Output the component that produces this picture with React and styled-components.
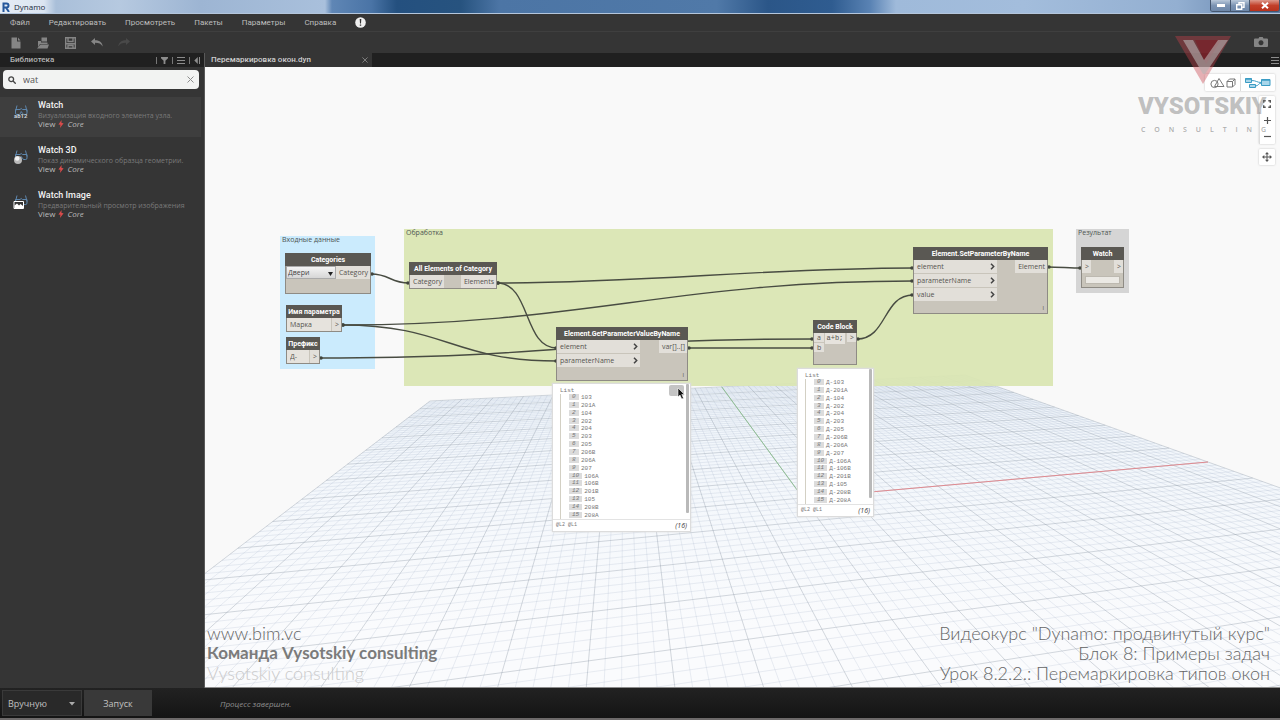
import React from "react";
import styled, { createGlobalStyle, css } from "styled-components";

const Global = createGlobalStyle`
  * { box-sizing: border-box; }
  body { margin: 0; background: #353535; font-family: "Open Sans", "Noto Sans", sans-serif; }
  button, input, select { font-family: inherit; margin: 0; padding: 0; border: 0; border-radius: 0; background: none; color: inherit; }
  ul, p, h1, h2, h3 { margin: 0; padding: 0; list-style: none; font-weight: inherit; font-size: inherit; }
  svg { display: block; flex: none; }
`;

/* ---------- frame ---------- */
const Window = styled.div`
  position: relative;
  display: flex;
  flex-direction: column;
  min-height: 100vh;
  overflow: hidden;
  color: #c8c8c8;
`;
const TitleBar = styled.header`
  display: flex;
  align-items: center;
  justify-content: space-between;
  height: 14px;
  padding-left: 2px;
  border-bottom: 1px solid #b4c6dc;
  color: #1b2b40;
  line-height: 13px;
  background: linear-gradient(90deg, #e6edf6 0, #dbe5f1 44px, #a9bfd9 56px, #b6c9e0 120px, #9db5d3 200px, #a9c0dc 325px, #5f86b5 332px, #4a74a6 29%, #24507f 31%, #27537f 36%, #4c75a5 39%, #5079a8 56%, #2b5688 60%, #2f5c90 65%, #5a83b4 68%, #9fbada 70%, #a3bddc 80%, #93afd1 92%, #5f7fa8 100%);
`;
const TitleText = styled.div`
  display: flex;
  align-items: center;
  gap: 4px;
  font-size: 8px;
`;
const WindowButtons = styled.div`
  display: flex;
  align-self: flex-start;
  height: 12px;
  border: 1px solid #44566f;
  border-top: 0;
  border-radius: 0 0 3px 3px;
  overflow: hidden;
`;
const WindowButton = styled.button`
  display: grid;
  place-items: center;
  width: ${(p) => (p.$close ? 30 : 19)}px;
  color: #fff;
  background: ${(p) => (p.$close ? "linear-gradient(#dd9a8c, #c2402a 50%, #b8321c)" : "linear-gradient(#b9c8da, #7c94b3 50%, #6d87a9)")};
  & + & { border-left: 1px solid #44566f; }
`;
const MenuBar = styled.nav`
  display: flex;
  align-items: center;
  gap: 19px;
  height: 18px;
  padding-left: 10px;
  background: #353535;
  border-bottom: 1px solid #3f3f3f;
`;
const MenuItem = styled.button`
  font-family: Roboto, sans-serif;
  font-size: 8px;
  line-height: 12px;
  color: #bdbdbd;
`;
const Toolbar = styled.div`
  display: flex;
  align-items: center;
  gap: 15px;
  height: 21px;
  padding: 0 12px 0 10px;
  background: #353535;
`;
const ToolButton = styled.button`
  display: grid;
  place-items: center;
  width: 12px;
  height: 14px;
  color: ${(p) => (p.$off ? "#494949" : "#858585")};
  ${(p) => p.$end && css`margin-left: auto; width: 14px;`}
`;
const Main = styled.div`
  display: flex;
  flex: 1;
`;

/* ---------- library ---------- */
const Sidebar = styled.aside`
  flex: none;
  display: flex;
  flex-direction: column;
  width: 205px;
  background: #353535;
  border-right: 1px solid #5a5a5a;
`;
const PanelHead = styled.div`
  display: flex;
  align-items: center;
  gap: 4px;
  height: 14px;
  padding: 0 4px 0 10px;
  background: #202020;
  font-family: Roboto, sans-serif;
  font-size: 8px;
  line-height: 12px;
  font-weight: 500;
  color: #b5b5b5;
  h2 { flex: 1; }
`;
const HeadButton = styled.button`
  display: grid;
  place-items: center;
  color: #8c8c8c;
`;
const Divider = styled.span`
  width: 1px;
  height: 7px;
  background: #777;
`;
const SearchBox = styled.label`
  display: flex;
  align-items: center;
  gap: 7px;
  height: 19px;
  margin: 3px 5px 0 3px;
  padding: 0 5px;
  border-radius: 4px;
  background: #f2f3f2;
  color: #444;
  input { flex: 1; min-width: 0; font-size: 9px; line-height: 14px; outline: 0; color: #555; }
`;
const Results = styled.ul`
  display: flex;
  flex-direction: column;
  gap: 5px;
  padding: 8px 3px 0 0;
`;
const Result = styled.li`
  display: flex;
  gap: 9px;
  height: 40px;
  padding: 3px 0 0 13px;
  background: ${(p) => (p.$active ? "#3e3e3e" : "transparent")};
  white-space: nowrap;
  svg { margin-top: 3px; }
`;
const ResultTitle = styled.h3`
  font-family: Roboto, sans-serif;
  font-size: 9px;
  line-height: 11px;
  color: #f2f2f2;
  font-weight: 500;
`;
const ResultText = styled.p`
  font-size: 7px;
  line-height: 9px;
  color: #7a7a7a;
`;
const ResultPath = styled.p`
  display: flex;
  align-items: center;
  gap: 3px;
  font-size: 8px;
  line-height: 8px;
  color: #bcbcbc;
  svg { margin: 0; }
`;

/* ---------- workspace ---------- */
const Workspace = styled.main`
  flex: 1;
  min-width: 0;
  display: flex;
  flex-direction: column;
`;
const Tabs = styled.div`
  display: flex;
  align-items: center;
  justify-content: space-between;
  height: 14px;
  padding-right: 1px;
  background: #202020;
`;
const Tab = styled.div`
  display: flex;
  align-items: center;
  justify-content: space-between;
  width: 167px;
  height: 14px;
  padding: 0 4px 0 6px;
  background: #353535;
  font-family: Roboto, sans-serif;
  font-size: 8px;
  line-height: 12px;
  font-weight: 500;
  color: #d0d0d0;
`;
const Canvas = styled.section`
  position: relative;
  flex: 1;
  overflow: hidden;
  background: #f9f9f9;
  border-bottom: 1px solid #8d8d8d;
`;
const Layer = styled.svg`
  position: absolute;
  inset: 0;
  width: 100%;
  height: 100%;
`;
const Placed = styled.div`
  position: absolute;
  left: ${(p) => p.$x}px;
  top: ${(p) => p.$y}px;
  width: ${(p) => p.$w}px;
  height: ${(p) => p.$h}px;
`;
const Group = styled(Placed)`
  background: ${(p) => p.$tone};
  padding-left: 2px;
  font-size: 7px;
  line-height: 8px;
  color: #4d5552;
  white-space: nowrap;
`;
const NodeBox = styled(Placed)`
  display: flex;
  flex-direction: column;
  border: 1px solid #8e8b84;
  background: #c9c5bb;
  color: #55534f;
  font-size: 7px;
  white-space: nowrap;
`;
const NodeTitle = styled.h3`
  height: 13px;
  margin: -1px -1px 0;
  background: #5a5853;
  color: #fff;
  font-family: Roboto, sans-serif;
  font-size: 7px;
  line-height: 14px;
  font-weight: 700;
  text-align: center;
`;
const NodeBody = styled.div`
  position: relative;
  display: flex;
  flex: 1;
  justify-content: space-between;
  align-items: flex-start;
`;
const PortColumn = styled.div`
  display: flex;
  flex-direction: column;
  gap: 1px;
  min-width: ${(p) => p.$w || 0}px;
`;
const Port = styled.div`
  display: flex;
  align-items: center;
  justify-content: space-between;
  gap: 2px;
  height: ${(p) => (p.$short ? 9 : 13)}px;
  padding: 0 2px 0 3px;
  background: #e2dfd9;
`;
const Lacing = styled.span`
  position: absolute;
  right: 3px;
  bottom: 1px;
  font-size: 6px;
  line-height: 7px;
`;
const NodeSelect = styled.div`
  position: relative;
  flex: 1;
  height: 13px;
  border: 1px solid #aaa;
  background: linear-gradient(#f4f4f4, #d6d6d6);
  select { display: block; width: 100%; height: 11px; padding-left: 1px; appearance: none; font-size: 7px; line-height: 9px; color: #444; outline: 0; }
  svg { position: absolute; right: 2px; top: 5px; pointer-events: none; }
`;
const NodeInput = styled.input`
  width: ${(p) => p.$w}px;
  height: 13px;
  padding-left: 3px;
  background: #e6e3dd;
  font-size: 7px;
  line-height: 11px;
  outline: 0;
`;
const CodeInput = styled(NodeInput)`
  height: 11px;
  padding-left: 1px;
  font-family: "Liberation Mono", monospace;
`;
const WatchField = styled.div`
  height: 8px;
  margin: 0 3px 3px;
  border: 1px solid #bdb9b0;
  background: #ebe9e4;
`;
const Preview = styled(Placed)`
  display: flex;
  flex-direction: column;
  border: 1px solid #dcdcdc;
  background: #fff;
  color: #777;
  font-family: "Liberation Mono", monospace;
  font-size: 6px;
  line-height: 7px;
  box-shadow: 0 0 2px #ddd;
`;
const PreviewList = styled.div`
  flex: 1;
  padding: 3px 0 0 7px;
  ul {
    display: flex;
    flex-direction: column;
    justify-content: space-between;
    height: 125px;
    padding-left: 8px;
    border-left: 1px solid #d3d0c4;
  }
  li { display: flex; gap: 2px; }
`;
const Index = styled.span`
  min-width: 10px;
  padding: 0 3px;
  background: #dcdcdc;
  font-style: italic;
  height: 6px;
  line-height: 6px;
`;
const PreviewFoot = styled.div`
  display: flex;
  align-items: center;
  justify-content: space-between;
  height: 14px;
  padding: 0 3px;
  border-top: 1px solid #e3e3e3;
  font-size: 5px;
  b { font: italic 400 7px/9px "Open Sans", sans-serif; color: #444; }
`;
const ScrollThumb = styled.span`
  position: absolute;
  top: 0;
  right: 1px;
  width: 3px;
  height: 129px;
  border-radius: 1px;
  background: #b9b9b9;
`;
const PreviewMenu = styled.button`
  position: absolute;
  top: 1px;
  right: 6px;
  width: 15px;
  height: 11px;
  border-radius: 2px;
  background: #c4c4c4;
`;
const Pointer = styled.svg`
  position: absolute;
  left: 472px;
  top: 320px;
`;

/* ---------- view controls ---------- */
const Controls = styled.div`
  position: absolute;
  top: 7px;
  right: 5px;
  display: flex;
  flex-direction: column;
  align-items: flex-end;
  gap: 5px;
`;
const ControlGroup = styled.div`
  display: flex;
  flex-direction: ${(p) => (p.$column ? "column" : "row")};
  border-radius: 1px;
  background: #fff;
  box-shadow: 0 0 2px #bbb;
`;
const ControlButton = styled.button`
  display: grid;
  place-items: center;
  width: ${(p) => (p.$wide ? 35 : 16)}px;
  height: ${(p) => (p.$wide ? 17 : 16)}px;
  color: #555;
  ${(p) => p.$wide && css`& + & { border-left: 1px solid #ddd; }`}
`;

/* ---------- captions ---------- */
const Brand = styled.div`
  position: absolute;
  top: 36px;
  right: 11px;
  width: 131px;
  pointer-events: none;
  svg { margin-left: 37px; }
`;
const BrandName = styled.p`
  margin-top: 7px;
  font-family: Roboto, sans-serif;
  font-size: 24px;
  line-height: 30px;
  font-weight: 900;
  color: rgba(120, 120, 120, 0.45);
`;
const BrandSub = styled.p`
  padding: 4px 3px 0;
  font-size: 7px;
  line-height: 10px;
  font-weight: 600;
  text-align-last: justify;
  color: rgba(120, 120, 120, 0.6);
`;
const Caption = styled.div`
  position: absolute;
  bottom: 4px;
  ${(p) => (p.$right ? "right: 10px; text-align: right;" : "left: 2px;")}
  font-family: Lato, "Open Sans", sans-serif;
  font-size: 18px;
  line-height: 20px;
  font-weight: 300;
  color: #666;
  white-space: nowrap;
  pointer-events: none;
`;
const Team = styled.p`
  font-size: 17px;
  font-weight: 700;
  color: #7b7b7b;
`;
const Faded = styled.p`
  color: #cacaca;
`;

/* ---------- status bar ---------- */
const StatusBar = styled.footer`
  display: flex;
  align-items: center;
  gap: 2px;
  height: 32px;
  padding-left: 2px;
  border-bottom: 2px solid #6d6a6a;
  background: linear-gradient(#222, #141414);
`;
const RunMode = styled.div`
  position: relative;
  width: 80px;
  height: 26px;
  border: 1px solid #3a3a3a;
  background: #292929;
  select { display: block; width: 100%; height: 24px; padding-left: 5px; appearance: none; font-size: 9px; color: #c0c0c0; outline: 0; }
  svg { position: absolute; right: 6px; top: 11px; pointer-events: none; }
`;
const RunButton = styled.button`
  width: 68px;
  height: 26px;
  background: #393939;
  font-size: 9px;
  color: #c0c0c0;
`;
const Status = styled.output`
  margin-left: 66px;
  font-size: 8px;
  font-style: italic;
  color: #8f8f8f;
`;

/* Ground plane: u and v run from -1 to 1 over the grid. */
const project = (u, v) => {
  const w = 0.1651 * u + 0.829 * v + 1;
  const x = (604.4 * u + 516.9 * v + 803) / w - 205;
  const y = (40.3 * u + 209.5 * v + 498) / w - 67;
  return x.toFixed(1) + " " + y.toFixed(1);
};
const segment = (a, b, c, d) => `M${project(a, b)}L${project(c, d)}`;
const gridPath = (major) => {
  let path = "";
  for (let i = -50; i <= 50; i += 1) {
    if ((i % 5 === 0) === major) {
      const t = i / 50;
      path += segment(t, -1, t, 1) + segment(-1, t, 1, t);
    }
  }
  return path;
};
const MINOR = gridPath(false);
const MAJOR = gridPath(true);

const Ground = () => (
  <Layer aria-hidden="true">
    <defs>
      <linearGradient id="haze" gradientUnits="userSpaceOnUse" x1="0" y1="310" x2="0" y2="560">
        <stop offset="0" stopColor="#eef4fa" />
        <stop offset="1" stopColor="#fafbfd" />
      </linearGradient>
    </defs>
    <path d={`M${project(-1, 1)}L${project(1, 1)}L${project(1, -1)}L${project(-1, -1)}Z`} fill="url(#haze)" />
    <path d={MINOR} fill="none" stroke="#9fb0c8" strokeOpacity="0.21" />
    <path d={MAJOR} fill="none" stroke="#84909e" strokeOpacity="0.34" />
    <path d={segment(0, 0, 1, 0)} fill="none" stroke="#e08a90" />
    <path d={segment(0, 0, 0, 1)} fill="none" stroke="#8fbf92" />
  </Layer>
);

const WIRES = [
  [166, 207, 204, 216, 19],
  [292, 216, 708, 201, 150],
  [292, 216, 352, 281, 34],
  [137, 258, 708, 214, 240],
  [137, 258, 352, 294, 105],
  [115, 291, 608, 272, 240],
  [483, 281, 608, 281, 40],
  [652, 272, 708, 228, 30],
  [843, 200, 876, 201, 10],
];
const Wires = () => (
  <Layer aria-hidden="true">
    {WIRES.map(([x1, y1, x2, y2, k], i) => (
      <g key={i} fill="#40443c">
        <path d={`M${x1} ${y1}C${x1 + k} ${y1} ${x2 - k} ${y2} ${x2} ${y2}`} fill="none" stroke="#484c42" strokeWidth="1.4" />
        <circle cx={x1 + 1} cy={y1} r="1.8" />
        <circle cx={x2 - 1} cy={y2} r="1.8" />
      </g>
    ))}
  </Layer>
);

const Chevron = () => (
  <svg width="5" height="7" viewBox="0 0 5 7" fill="none" stroke="#444" strokeWidth="1.5"><path d="M1 .8 3.7 3.5 1 6.2" /></svg>
);
const CloseMark = ({ size = 7 }) => (
  <svg width={size} height={size} viewBox="0 0 7 7" fill="none" stroke="currentColor"><path d="M.5.5l6 6M6.500.5l-6 6" /></svg>
);
const Bars = () => (
  <svg width="8" height="7" viewBox="0 0 8 7" stroke="currentColor"><path d="M0 .5h8M0 3.500h8M0 6.500h8" /></svg>
);
const Bolt = () => (
  <svg width="6" height="8" viewBox="0 0 6 8" fill="#d94b4b"><path d="M3.600 0 .4 4.600l2 .2L2 8l3.600-4.700-2.100-.3z" /></svg>
);
const WatchIcon = ({ kind }) => (
  <svg width="16" height="18" viewBox="0 0 16 18" fill="none">
    <path d="M2.500 8.500 4 2.500M14 8.500 12.500 2.500M2.500 6.500h4.500l1.200-1 1.300 1h4.500v3.500q0 1.500-1.300 1.500h-1.700q-1.200 0-1.500-1.200L8.200 8.500l-.7 1.800q-.3 1.200-1.500 1.200H3.800q-1.300 0-1.300-1.500z" stroke="#5d86ad" />
    {kind === "text" && <text x="1" y="15" fontSize="6" fontWeight="700" fill="#c9d2da" fontFamily="Roboto, sans-serif">ab12</text>}
    {kind === "solid" && <g><circle cx="5" cy="12" r="4" fill="#b9b9b9" /><circle cx="4.200" cy="10.500" r="2.200" fill="#f4f4f4" /></g>}
    {kind === "image" && <g><path d="M1 8.500h9.500v7H1z" fill="#333" stroke="#fff" /><path d="M1.500 15v-2.500l2.500-2 2 2 1.500-1.500 2.500 2v2z" fill="#fff" /></g>}
  </svg>
);

const RESULTS = [
  ["Watch", "Визуализация входного элемента узла.", "text"],
  ["Watch 3D", "Показ динамического образца геометрии.", "solid"],
  ["Watch Image", "Предварительный просмотр изображения", "image"],
];
const VALUES = ["103", "201A", "104", "202", "204", "203", "205", "206B", "206A", "207", "106A", "106B", "201B", "105", "208B", "208A"];

const ListPreview = ({ prefix = "", menu, ...place }) => (
  <Preview {...place}>
    <PreviewList>
      List
      <ul>
        {VALUES.map((v, i) => (
          <li key={v}><Index>{i}</Index>{prefix + v}</li>
        ))}
      </ul>
    </PreviewList>
    <PreviewFoot><span>@L2 @L1</span><b>(16)</b></PreviewFoot>
    <ScrollThumb />
    {menu && <PreviewMenu aria-label="Меню" />}
  </Preview>
);

const Node = ({ title, children, ...place }) => (
  <NodeBox {...place}>
    <NodeTitle>{title}</NodeTitle>
    {children}
  </NodeBox>
);

const Graph = () => (
  <>
    <Group $x={75} $y={169} $w={95} $h={133} $tone="#cbebfd">Входные данные</Group>
    <Group $x={199} $y={162} $w={649} $h={157} $tone="rgba(218, 230, 178, 0.94)">Обработка</Group>
    <Group $x={871} $y={162} $w={53} $h={64} $tone="#d5d5d5">Результат</Group>
    <Wires />
    <Node title="Categories" $x={80} $y={186} $w={86} $h={41}>
      <NodeBody>
        <NodeSelect>
          <select aria-label="Category"><option>Двери</option></select>
          <svg width="5" height="4" viewBox="0 0 5 4"><path d="M0 0h5L2.500 4z" fill="#222" /></svg>
        </NodeSelect>
        <Port>Category</Port>
      </NodeBody>
    </Node>
    <Node title="Имя параметра" $x={81} $y={238} $w={56} $h={27}>
      <NodeBody><NodeInput $w={44} aria-label="Имя параметра" defaultValue="Марка" /><Port>&gt;</Port></NodeBody>
    </Node>
    <Node title="Префикс" $x={81} $y={270} $w={34} $h={27}>
      <NodeBody><NodeInput $w={22} aria-label="Префикс" defaultValue="Д-" /><Port>&gt;</Port></NodeBody>
    </Node>
    <Node title="All Elements of Category" $x={204} $y={195} $w={88} $h={27}>
      <NodeBody><Port>Category</Port><Port>Elements</Port></NodeBody>
    </Node>
    <Node title="Element.GetParameterValueByName" $x={351} $y={260} $w={132} $h={54}>
      <NodeBody>
        <PortColumn $w={83}><Port>element<Chevron /></Port><Port>parameterName<Chevron /></Port></PortColumn>
        <Port>var[]..[]</Port>
        <Lacing>l</Lacing>
      </NodeBody>
    </Node>
    <Node title="Code Block" $x={608} $y={253} $w={44} $h={45}>
      <NodeBody>
        <PortColumn $w={10}><Port $short>a</Port><Port $short>b</Port></PortColumn>
        <CodeInput $w={20} aria-label="Code Block" defaultValue="a+b;" />
        <Port $short>&gt;</Port>
      </NodeBody>
    </Node>
    <Node title="Element.SetParameterByName" $x={708} $y={180} $w={135} $h={67}>
      <NodeBody>
        <PortColumn $w={83}><Port>element<Chevron /></Port><Port>parameterName<Chevron /></Port><Port>value<Chevron /></Port></PortColumn>
        <Port>Element</Port>
        <Lacing>l</Lacing>
      </NodeBody>
    </Node>
    <Node title="Watch" $x={876} $y={180} $w={43} $h={41}>
      <NodeBody><Port>&gt;</Port><Port>&gt;</Port></NodeBody>
      <WatchField />
    </Node>
    <ListPreview menu $x={347} $y={316} $w={139} $h={149} />
    <ListPreview prefix="Д-" $x={592} $y={301} $w={77} $h={149} />
    <Pointer width="9" height="13" viewBox="0 0 9 13"><path d="M1 1v9l2-2 1.700 4 1.800-.8-1.700-3.800h2.700z" fill="#111" stroke="#fff" strokeWidth=".6" /></Pointer>
  </>
);

const ViewControls = () => (
  <Controls>
    <ControlGroup>
      <ControlButton $wide aria-label="3D">
        <svg width="26" height="12" viewBox="0 0 26 12" fill="none" stroke="#777"><circle cx="4.500" cy="7" r="3.600" /><path d="M9 1.500 14 9.500H4.500zM17 4.500h5.500V10H17zM17 4.500l2.500-2.500h5.500l-2.500 2.500M25 2v5.500L22.500 10" /></svg>
      </ControlButton>
      <ControlButton $wide aria-label="Граф">
        <svg width="26" height="12" viewBox="0 0 26 12" fill="#a9d6ea" stroke="#3b9cc4"><path d="M.5 1.500h6v4h-6zM16.500 2.500h8.500v6h-8.500zM4.500 7.500h6v3h-6z" /><path d="M.5 2h6M16.500 3h8.500" strokeWidth="1.500" /><path d="M6.500 3.500c5 0 5 2 10 2M10.500 9c3 0 3-3 6-3" fill="none" /></svg>
      </ControlButton>
    </ControlGroup>
    <ControlGroup $column>
      <ControlButton aria-label="Вписать"><svg width="8" height="8" viewBox="0 0 8 8" fill="none" stroke="currentColor" strokeWidth="1.400"><path d="M.7 2.700v-2h2M5.300.7h2v2M7.300 5.300v2h-2M2.700 7.300h-2v-2" /></svg></ControlButton>
      <ControlButton aria-label="Увеличить"><svg width="7" height="7" viewBox="0 0 7 7" stroke="currentColor" strokeWidth="1.200"><path d="M0 3.500h7M3.500 0v7" /></svg></ControlButton>
      <ControlButton aria-label="Уменьшить"><svg width="7" height="7" viewBox="0 0 7 7" stroke="currentColor" strokeWidth="1.200"><path d="M0 3.500h7" /></svg></ControlButton>
    </ControlGroup>
    <ControlGroup>
      <ControlButton aria-label="Панорама"><svg width="10" height="10" viewBox="0 0 10 10" fill="currentColor"><path d="M5 0 7 2.300H5.500v2.200h2.200V3L10 5 7.700 7V5.500H5.500v2.200H7L5 10 3 7.700h1.500V5.500H2.300V7L0 5l2.300-2v1.500h2.200V2.300H3z" /></svg></ControlButton>
    </ControlGroup>
  </Controls>
);

export default function App() {
  return (
    <Window>
      <Global />
      <TitleBar>
        <TitleText>
          <svg width="8" height="10" viewBox="0 0 8 10" fill="none" stroke="#24579c" strokeWidth="2"><path d="M1.500 10V1.500h3q2 0 2 2t-2 2h-2M4 5.500 7 10" /></svg>
          Dynamo
        </TitleText>
        <WindowButtons>
          <WindowButton aria-label="Свернуть"><svg width="8" height="3" viewBox="0 0 8 3"><path d="M0 0h8v3H0z" fill="#fff" /></svg></WindowButton>
          <WindowButton aria-label="Развернуть"><svg width="9" height="8" viewBox="0 0 9 8" fill="none" stroke="#fff" strokeWidth="1.400"><path d="M3 2V.7h5v4.600H6.500M.7 2.700h5v4.600h-5z" /></svg></WindowButton>
          <WindowButton $close aria-label="Закрыть"><svg width="8" height="7" viewBox="0 0 8 7" stroke="#fff" strokeWidth="2"><path d="M1 .8l6 5.400M7 .8 1 6.200" /></svg></WindowButton>
        </WindowButtons>
      </TitleBar>
      <MenuBar>
        {["Файл", "Редактировать", "Просмотреть", "Пакеты", "Параметры", "Справка"].map((t) => <MenuItem key={t}>{t}</MenuItem>)}
        <MenuItem aria-label="Уведомления">
          <svg width="11" height="11" viewBox="0 0 11 11"><circle cx="5.500" cy="5.500" r="5.300" fill="#efefef" /><path d="M4.700 2h1.600l-.3 4.500h-1zM4.800 7.400h1.400v1.400H4.800z" fill="#333" /></svg>
        </MenuItem>
      </MenuBar>
      <Toolbar>
        <ToolButton aria-label="Создать"><svg width="10" height="12" viewBox="0 0 10 12" fill="currentColor"><path d="M.5.500h5.500v4h3.500v7h-9zM7 .5 9.500 3.500H7z" /></svg></ToolButton>
        <ToolButton aria-label="Открыть"><svg width="12" height="12" viewBox="0 0 12 12" fill="currentColor"><path d="M4.500.5 10 .5v4h-5.500zM1 4h3v1.500h6.500V7H3L1 10zM3.500 7.500H12L10.500 11.500H0z" /></svg></ToolButton>
        <ToolButton aria-label="Сохранить"><svg width="11" height="12" viewBox="0 0 11 12" fill="none" stroke="currentColor" strokeWidth="1.400"><path d="M.7.7h9.600v10.600H.7zM3 1v3.500h5V1M1 6.700h9M3 11V8.500h5V11" /></svg></ToolButton>
        <ToolButton aria-label="Отменить"><svg width="12" height="9" viewBox="0 0 12 9" fill="currentColor"><path d="M4 0v2.200c5 0 7.500 2.500 7.700 6.300C10 5.700 8 4.800 4 4.800V7L0 3.500z" /></svg></ToolButton>
        <ToolButton $off aria-label="Вернуть"><svg width="12" height="9" viewBox="0 0 12 9" fill="currentColor"><path d="M8 0v2.200C3 2.200.5 4.700.3 8.500 2 5.700 4 4.800 8 4.800V7l4-3.500z" /></svg></ToolButton>
        <ToolButton $end aria-label="Снимок"><svg width="14" height="11" viewBox="0 0 14 11" fill="currentColor"><path fillRule="evenodd" d="M4.500 1.500 5.300 0h3.400l.8 1.500H13q1 0 1 1V9q0 1-1 1H1Q0 10 0 9V2.500q0-1 1-1zM7 3.200a2.500 2.500 0 1 0 .01 0z" /></svg></ToolButton>
      </Toolbar>
      <Main>
        <Sidebar>
          <PanelHead>
            <h2>Библиотека</h2>
            <Divider />
            <HeadButton aria-label="Фильтр"><svg width="7" height="7" viewBox="0 0 7 7" fill="currentColor"><path d="M0 0h7v1.200L4.400 3.800V7H2.600V3.800L0 1.200z" /></svg></HeadButton>
            <Divider />
            <HeadButton aria-label="Список"><Bars /></HeadButton>
            <Divider />
            <HeadButton aria-label="Скрыть"><svg width="6" height="7" viewBox="0 0 6 7" fill="currentColor"><path d="M3.800 0v7L.3 3.500zM5 0h1v7H5z" /></svg></HeadButton>
          </PanelHead>
          <SearchBox>
            <svg width="8" height="8" viewBox="0 0 8 8" fill="none" stroke="currentColor" strokeWidth="1.300"><circle cx="3.200" cy="3.200" r="2.400" /><path d="M5 5l2.700 2.700" /></svg>
            <input aria-label="Поиск" defaultValue="wat" />
            <HeadButton aria-label="Очистить"><CloseMark /></HeadButton>
          </SearchBox>
          <Results>
            {RESULTS.map(([title, text, kind], i) => (
              <Result key={title} $active={i === 0}>
                <WatchIcon kind={kind} />
                <div>
                  <ResultTitle>{title}</ResultTitle>
                  <ResultText>{text}</ResultText>
                  <ResultPath>View <Bolt /> <em>Core</em></ResultPath>
                </div>
              </Result>
            ))}
          </Results>
        </Sidebar>
        <Workspace>
          <Tabs>
            <Tab>Перемаркировка окон.dyn<HeadButton aria-label="Закрыть вкладку"><CloseMark size={6} /></HeadButton></Tab>
            <HeadButton aria-label="Вкладки"><Bars /></HeadButton>
          </Tabs>
          <Canvas>
            <Ground />
            <Graph />
            <ViewControls />
            <Caption>
              <p>www.bim.vc</p>
              <Team>Команда Vysotskiy consulting</Team>
              <Faded>Vysotskiy consulting</Faded>
            </Caption>
            <Caption $right>
              <p>Видеокурс "Dynamo: продвинутый курс"</p>
              <p>Блок 8: Примеры задач</p>
              <p>Урок 8.2.2.: Перемаркировка типов окон</p>
            </Caption>
          </Canvas>
        </Workspace>
      </Main>
      <StatusBar>
        <RunMode>
          <select aria-label="Режим запуска"><option>Вручную</option></select>
          <svg width="6" height="4" viewBox="0 0 6 4"><path d="M0 0h6L3 3.500z" fill="#aaa" /></svg>
        </RunMode>
        <RunButton>Запуск</RunButton>
        <Status>Процесс завершен.</Status>
      </StatusBar>
      <Brand>
        <svg width="56" height="48" viewBox="0 0 56 48"><path d="M0 0h56L28 48z" fill="#c8404a" fillOpacity=".4" /><path d="M20 4h26L31 28z" fill="#7d1520" fillOpacity=".5" /><path d="M8 4h10l11 20L43 4h10L30 38h-2z" fill="#b8b4b4" fillOpacity=".6" /></svg>
        <BrandName>VYSOTSKIY</BrandName>
        <BrandSub>C O N S U L T I N G</BrandSub>
      </Brand>
    </Window>
  );
}
